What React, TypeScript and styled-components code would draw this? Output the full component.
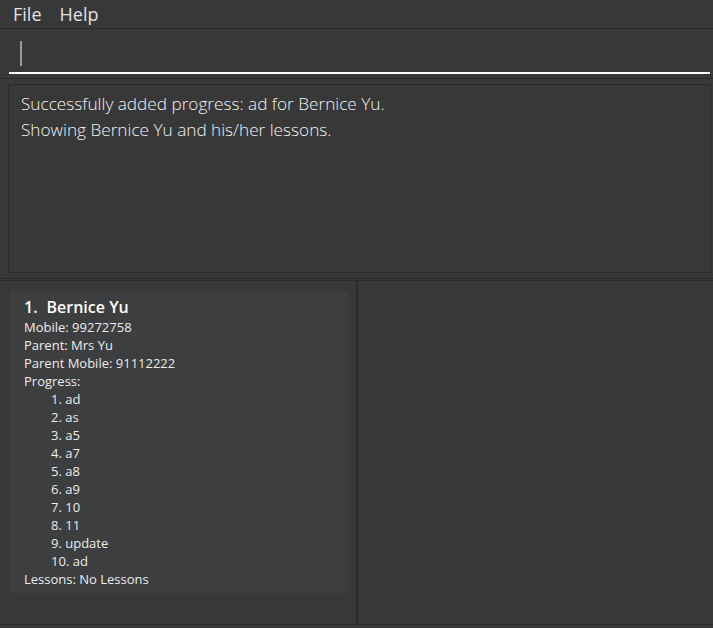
import React from "react";
import styled, { createGlobalStyle } from "styled-components";

const Global = createGlobalStyle`
  html, body { margin: 0; padding: 0; background: #383838; }
  body { font-family: "Open Sans", "Segoe UI", sans-serif; color: #ffffff; }
  #root { width: 713px; height: 628px; overflow: hidden; }
`;

const Window = styled.div`
  width: 713px;
  height: 628px;
  display: flex;
  flex-direction: column;
  background: #383838;
`;

const MenuBar = styled.div`
  height: 28px;
  display: flex;
  align-items: center;
  gap: 18px;
  padding-left: 13px;
  border-bottom: 1px solid #2b2b2b;
  box-sizing: content-box;
  background: #383838;
`;

const MenuItem = styled.span`
  font-size: 18px;
  font-weight: 400;
  color: #e2e2e2;
  line-height: 28px;
`;

const CommandPane = styled.div`
  height: 49px;
  padding: 0 3px 0 9px;
  border-bottom: 1px solid #2b2b2b;
  display: flex;
  flex-direction: column;
  justify-content: flex-start;
`;

const CommandField = styled.div`
  height: 45px;
  border-bottom: 2px solid #ffffff;
  display: flex;
  align-items: flex-start;
  padding-left: 11px;
  box-sizing: border-box;
`;

const Caret = styled.div`
  width: 2px;
  height: 25px;
  background: #9a9a9a;
  margin-top: 12px;
`;

const ResultPane = styled.div`
  height: 200px;
  padding: 5px 2px 0 8px;
  border-bottom: 1px solid #2b2b2b;
  box-sizing: border-box;
`;

const ResultBox = styled.div`
  height: 189px;
  border: 1px solid #2b2b2b;
  box-sizing: border-box;
  padding: 6px 12px;
  font-size: 17.2px;
  font-weight: 300;
  line-height: 26px;
  color: #f2f2f2;
`;

const ListArea = styled.div`
  flex: 1;
  display: flex;
  border-top: 1px solid #2b2b2b;
  margin-top: 1px;
  border-bottom: 1px solid #2b2b2b;
  margin-bottom: 3px;
`;

const LeftPanel = styled.div`
  width: 358px;
  border-right: 2px solid #2b2b2b;
  padding: 10px 10px 0 10px;
  box-sizing: border-box;
`;

const RightPanel = styled.div`
  flex: 1;
`;

const Card = styled.div`
  background: #3c3e3f;
  width: 338px;
  padding: 5px 14px 5px 14px;
  box-sizing: border-box;
`;

const Name = styled.div`
  font-size: 16px;
  font-weight: 600;
  line-height: 22px;
  color: #ffffff;
  display: flex;
  gap: 9px;
`;

const Detail = styled.div<{ $indent?: boolean }>`
  font-size: 13px;
  line-height: 18px;
  color: #ececec;
  padding-left: ${(p) => (p.$indent ? "27px" : "0")};
`;

const progress = ["ad", "as", "a5", "a7", "a8", "a9", "10", "11", "update", "ad"];

export default function App() {
  return (
    <>
      <Global />
      <Window>
        <MenuBar>
          <MenuItem>File</MenuItem>
          <MenuItem>Help</MenuItem>
        </MenuBar>
        <CommandPane>
          <CommandField>
            <Caret />
          </CommandField>
        </CommandPane>
        <ResultPane>
          <ResultBox>
            <div>Successfully added progress: ad for Bernice Yu.</div>
            <div>Showing Bernice Yu and his/her lessons.</div>
          </ResultBox>
        </ResultPane>
        <ListArea>
          <LeftPanel>
            <Card>
              <Name>
                <span>1.</span>
                <span>Bernice Yu</span>
              </Name>
              <Detail>Mobile: 99272758</Detail>
              <Detail>Parent: Mrs Yu</Detail>
              <Detail>Parent Mobile: 91112222</Detail>
              <Detail>Progress:</Detail>
              {progress.map((p, i) => (
                <Detail $indent key={i}>
                  {i + 1}. {p}
                </Detail>
              ))}
              <Detail>Lessons: No Lessons</Detail>
            </Card>
          </LeftPanel>
          <RightPanel />
        </ListArea>
      </Window>
    </>
  );
}
